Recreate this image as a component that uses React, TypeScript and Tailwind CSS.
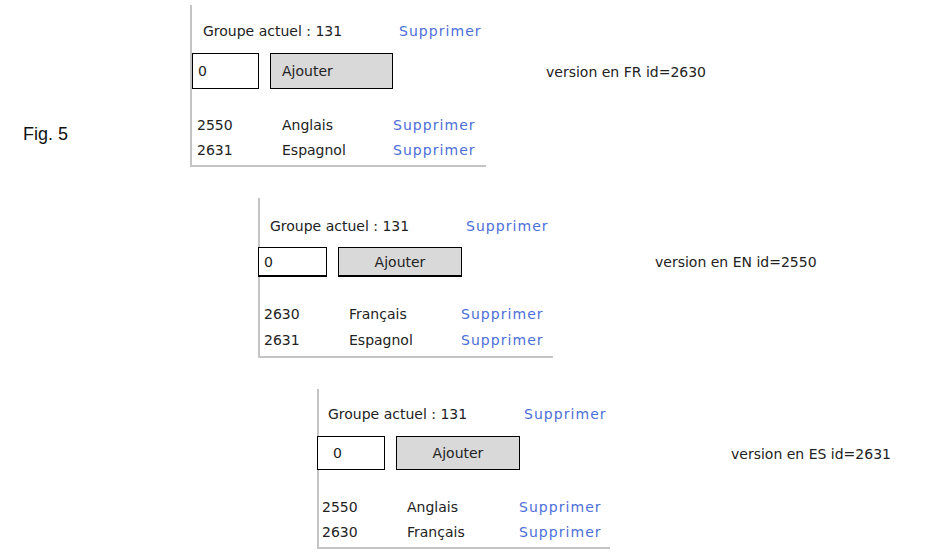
import React from "react";

type Row = { id: string; lang: string };

function Panel(props: {
  panel: string;
  headRow: string;
  inputRow: string;
  input: string;
  button: string;
  rows: string;
  rowH: string;
  linkCol: string;
  langCol: string;
  data: Row[];
  version: string;
  versionCls: string;
}) {
  return (
    <div className="flex items-start">
      <div className={"flex flex-col border-l-2 border-b-2 border-[#c4c4c4] " + props.panel}>
        <div className={"flex items-center " + props.headRow}>
          <span className="w-[196px] text-[#222]">Groupe actuel : 131</span>
          <span className="text-[#4d6fd8] tracking-[1.05px]">Supprimer</span>
        </div>
        <div className={"flex " + props.inputRow}>
          <div className={"flex items-center border border-black bg-white text-[#222] " + props.input}>0</div>
          <div className={"flex items-center bg-[#d9d9d9] border border-black text-[#222] " + props.button}>Ajouter</div>
        </div>
        <div className={"flex flex-col " + props.rows}>
          {props.data.map((r) => (
            <div key={r.id} className={"flex items-center " + props.rowH}>
              <span className={"text-[#222] " + props.langCol}>{r.id}</span>
              <span className={"text-[#222] " + props.linkCol}>{r.lang}</span>
              <span className="text-[#4d6fd8] tracking-[1.05px]">Supprimer</span>
            </div>
          ))}
        </div>
      </div>
      <div className={"text-[#222] " + props.versionCls}>{props.version}</div>
    </div>
  );
}

export default function App() {
  return (
    <div
      className="w-[946px] h-[557px] bg-white overflow-hidden relative text-[14px] leading-none"
      style={{ fontFamily: '"DejaVu Sans", Verdana, sans-serif' }}
    >
      <div className="flex items-start pt-[5px]">
        <div
          className="w-[190px] pl-[23px] pt-[120px] text-[18px] text-[#111]"
          style={{ fontFamily: '"Liberation Sans", Arial, sans-serif' }}
        >
          Fig. 5
        </div>
        <Panel
          panel="w-[296px] h-[162px]"
          headRow="h-[48px] pl-[11px] pt-[4px]"
          inputRow="h-[36px] gap-[11px]"
          input="w-[67px] h-[36px] pl-[5px]"
          button="w-[123px] h-[36px] pl-[11px]"
          rows="pt-[23px] pl-[5px]"
          rowH="h-[25px]"
          langCol="w-[85px]"
          linkCol="w-[111px]"
          data={[
            { id: "2550", lang: "Anglais" },
            { id: "2631", lang: "Espagnol" },
          ]}
          version="version en FR id=2630"
          versionCls="ml-[60px] mt-[60px]"
        />
      </div>
      <div className="flex items-start pt-[31px] pl-[258px]">
        <Panel
          panel="w-[295px] h-[160px]"
          headRow="h-[49px] pl-[10px] pt-[6px]"
          inputRow="h-[30px] gap-[11px] -ml-[2px]"
          input="w-[69px] h-[30px] pl-[5px] border-b-2"
          button="w-[124px] h-[30px] justify-center border-b-2"
          rows="pt-[24px] pl-[4px]"
          rowH="h-[26px]"
          langCol="w-[85px]"
          linkCol="w-[112px]"
          data={[
            { id: "2630", lang: "Français" },
            { id: "2631", lang: "Espagnol" },
          ]}
          version="version en EN id=2550"
          versionCls="ml-[102px] mt-[57px]"
        />
      </div>
      <div className="flex items-start pt-[31px] pl-[317px]">
        <Panel
          panel="w-[293px] h-[160px]"
          headRow="h-[47px] pl-[9px] pt-[3px]"
          inputRow="h-[34px] gap-[11px] -ml-[2px]"
          input="w-[68px] h-[34px] pl-[15px]"
          button="w-[124px] h-[34px] justify-center"
          rows="pt-[24px] pl-[3px]"
          rowH="h-[25px]"
          langCol="w-[85px]"
          linkCol="w-[112px]"
          data={[
            { id: "2550", lang: "Anglais" },
            { id: "2630", lang: "Français" },
          ]}
          version="version en ES id=2631"
          versionCls="ml-[121px] mt-[58px]"
        />
      </div>
    </div>
  );
}
